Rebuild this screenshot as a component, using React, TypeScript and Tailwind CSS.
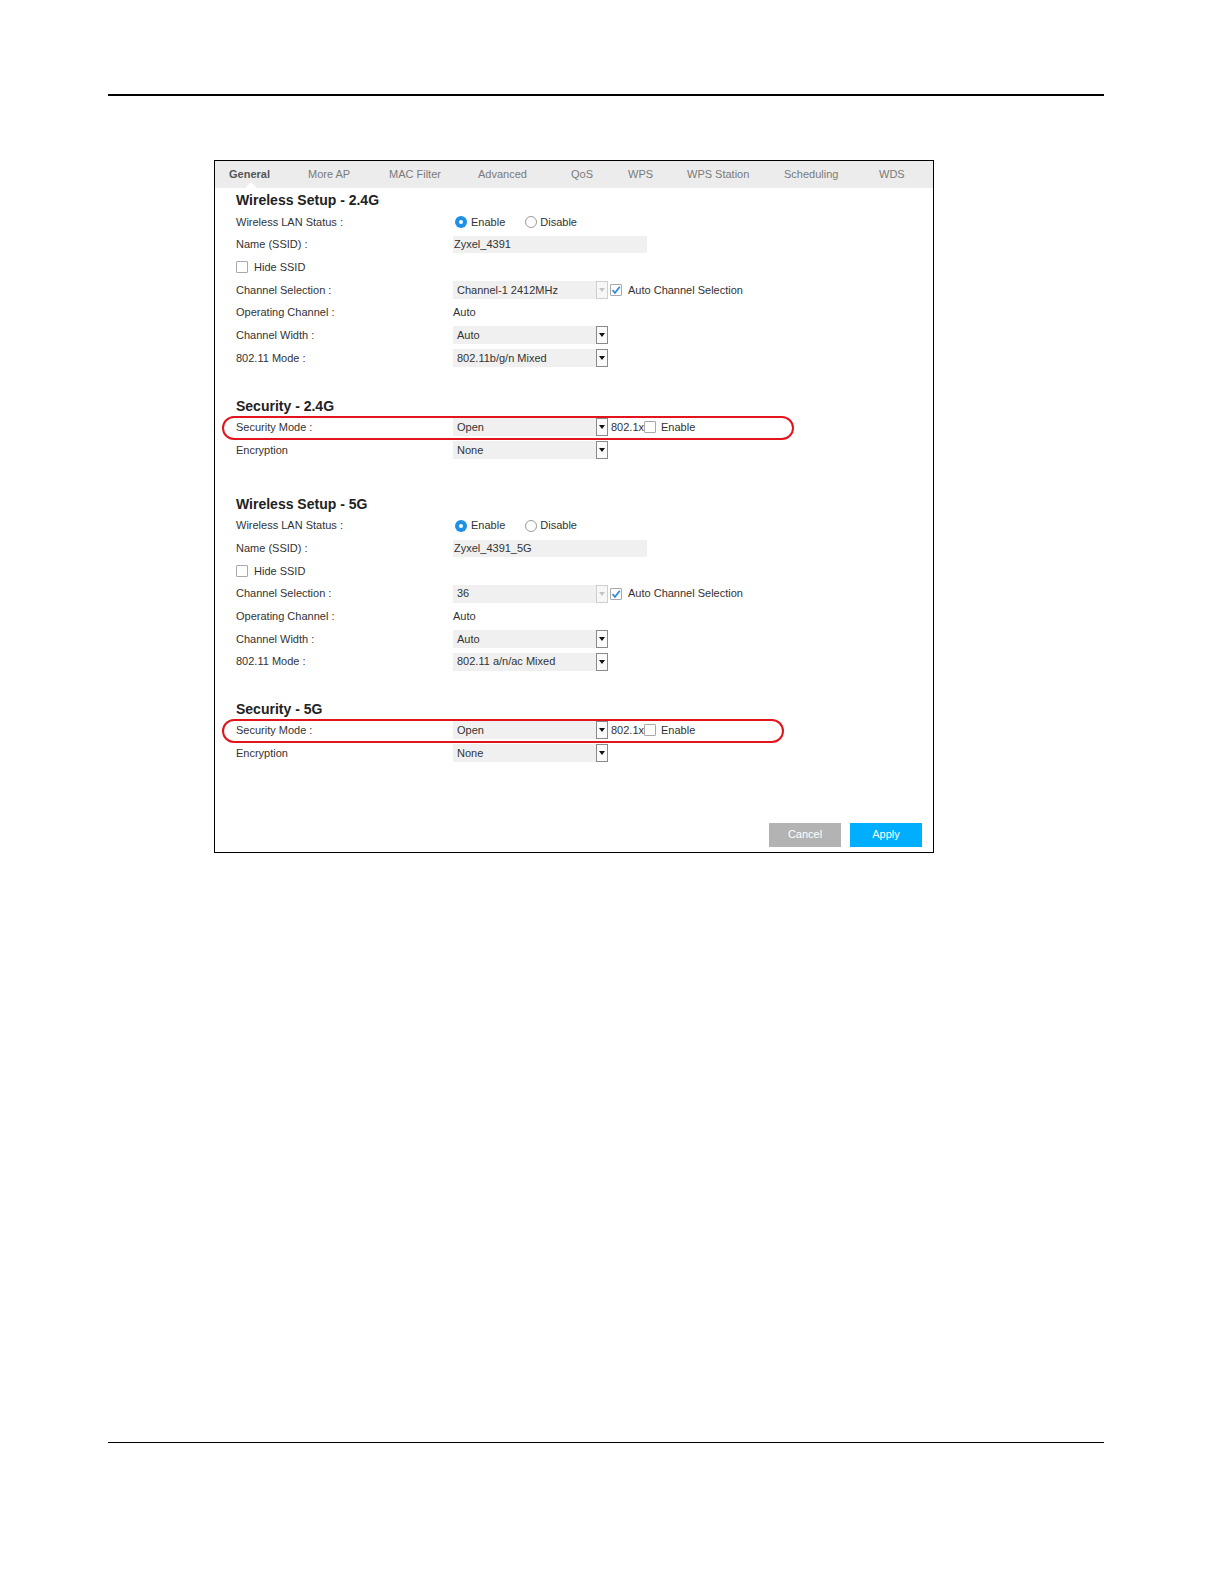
import React from "react";

const tabs = [
  { label: "General", w: "w-[79px]", active: true },
  { label: "More AP", w: "w-[81px]" },
  { label: "MAC Filter", w: "w-[89px]" },
  { label: "Advanced", w: "w-[93px]" },
  { label: "QoS", w: "w-[57px]" },
  { label: "WPS", w: "w-[59px]" },
  { label: "WPS Station", w: "w-[97px]" },
  { label: "Scheduling", w: "w-[95px]" },
  { label: "WDS", w: "w-[50px]" },
];

function Select({ value, disabled }: { value: string; disabled?: boolean }) {
  return (
    <div className="flex h-[18px] w-[155px] items-center bg-[#f0f0f0]">
      <span className="flex-1 pl-[4px] text-[#333]">{value}</span>
      <span
        className={
          disabled
            ? "flex h-[18px] w-[12px] items-center justify-center border border-[#cfcfcf] bg-[#f7f7f7]"
            : "flex h-[18px] w-[12px] items-center justify-center border border-[#8a8a8a] bg-[#fafafa]"
        }
      >
        <svg width="6" height="4" viewBox="0 0 6 4">
          <path d="M0 0 H6 L3 4 Z" fill={disabled ? "#c4c4c4" : "#111"} />
        </svg>
      </span>
    </div>
  );
}

function Checkbox({ checked }: { checked?: boolean }) {
  return (
    <span className="flex h-[12px] w-[12px] items-center justify-center rounded-[1px] border border-[#a9a9a9] bg-white">
      {checked && (
        <svg width="10" height="10" viewBox="0 0 10 10">
          <path d="M1.5 5.2 L4 7.8 L8.8 1.8" fill="none" stroke="#2f8de4" strokeWidth="1.8" />
        </svg>
      )}
    </span>
  );
}

function Radio({ checked }: { checked?: boolean }) {
  return checked ? (
    <span className="flex h-[12px] w-[12px] items-center justify-center rounded-full bg-[#1e90e6]">
      <span className="h-[4px] w-[4px] rounded-full bg-white" />
    </span>
  ) : (
    <span className="h-[12px] w-[12px] rounded-full border border-[#9a9a9a] bg-white" />
  );
}

function Row({ label, children }: { label?: React.ReactNode; children?: React.ReactNode }) {
  return (
    <div className="flex h-[22.67px] items-center">
      <div className="w-[217px] text-[#333]">{label}</div>
      <div className="flex items-center">{children}</div>
    </div>
  );
}

function Heading({ children }: { children: React.ReactNode }) {
  return <div className="flex h-[20px] items-center text-[14px] font-bold text-[#222]">{children}</div>;
}

function WirelessBlock({ title, ssid, channel, mode }: { title: string; ssid: string; channel: string; mode: string }) {
  return (
    <div className="flex flex-col">
      <Heading>{title}</Heading>
      <Row label="Wireless LAN Status :">
        <div className="ml-[2px] flex items-center gap-[4px]">
          <Radio checked />
          <span className="text-[#333]">Enable</span>
        </div>
        <div className="ml-[20px] flex items-center gap-[3px]">
          <Radio />
          <span className="text-[#333]">Disable</span>
        </div>
      </Row>
      <Row label="Name (SSID) :">
        <div className="flex h-[17px] w-[194px] items-center bg-[#f0f0f0] pl-[1px] text-[#333]">{ssid}</div>
      </Row>
      <div className="flex h-[22.67px] items-center gap-[6px]">
        <Checkbox />
        <span className="text-[#333]">Hide SSID</span>
      </div>
      <Row label="Channel Selection :">
        <Select value={channel} disabled />
        <span className="ml-[2px]">
          <Checkbox checked />
        </span>
        <span className="ml-[6px] text-[#333]">Auto Channel Selection</span>
      </Row>
      <Row label="Operating Channel :">
        <span className="text-[#333]">Auto</span>
      </Row>
      <Row label="Channel Width :">
        <Select value="Auto" />
      </Row>
      <Row label="802.11 Mode :">
        <Select value={mode} />
      </Row>
    </div>
  );
}

function SecurityBlock({ title, ringWidth }: { title: string; ringWidth: string }) {
  return (
    <div className="flex flex-col">
      <Heading>{title}</Heading>
      <div className="relative">
        <span className={`pointer-events-none absolute left-[-14px] top-[-0.5px] h-[24.5px] rounded-full border-2 border-[#e3141b] ${ringWidth}`} />
        <Row label="Security Mode :">
          <Select value="Open" />
          <span className="ml-[3px] text-[#333]">802.1x</span>
          <Checkbox />
          <span className="ml-[5px] text-[#333]">Enable</span>
        </Row>
      </div>
      <Row label="Encryption">
        <Select value="None" />
      </Row>
    </div>
  );
}

export default function App() {
  return (
    <div
      className="flex h-[1580px] w-full flex-col overflow-hidden bg-white text-[11px]"
      style={{ fontFamily: '"Liberation Sans", Arial, sans-serif' }}
    >
      <div className="pl-[108px] pr-[121px] pt-[94px]">
        <div className="h-[1.5px] bg-black" />
      </div>

      <div className="ml-[214px] mt-[64px] flex h-[693px] w-[720px] flex-col border border-black">
        <div className="flex h-[27px] items-center bg-[#ececec] pl-[14px]">
          {tabs.map((t) => (
            <div key={t.label} className={`relative flex h-[27px] items-center ${t.w}`}>
              <span className={t.active ? "font-bold text-[#555]" : "text-[#7a7a7a]"}>{t.label}</span>
              {t.active && (
                <span className="absolute bottom-0 left-[16px] h-0 w-0 border-x-[6px] border-b-[6px] border-x-transparent border-b-white" />
              )}
            </div>
          ))}
        </div>

        <div className="flex flex-1 flex-col pl-[21px]">
          <div className="mt-[3px]">
            <WirelessBlock title="Wireless Setup - 2.4G" ssid="Zyxel_4391" channel="Channel-1 2412MHz" mode="802.11b/g/n Mixed" />
          </div>
          <div className="mt-[27px]">
            <SecurityBlock title="Security - 2.4G" ringWidth="w-[572px]" />
          </div>
          <div className="mt-[33px]">
            <WirelessBlock title="Wireless Setup - 5G" ssid="Zyxel_4391_5G" channel="36" mode="802.11 a/n/ac Mixed" />
          </div>
          <div className="mt-[26px]">
            <SecurityBlock title="Security - 5G" ringWidth="w-[562px]" />
          </div>

          <div className="mt-auto flex justify-end gap-[9px] pb-[5px] pr-[11px]">
            <button className="flex h-[24px] w-[72px] items-center justify-center bg-[#b3b3b3] text-white">Cancel</button>
            <button className="flex h-[24px] w-[72px] items-center justify-center bg-[#00aeff] text-white">Apply</button>
          </div>
        </div>
      </div>

      <div className="mt-[589px] pl-[108px] pr-[121px]">
        <div className="h-[1.5px] bg-black" />
      </div>
    </div>
  );
}
